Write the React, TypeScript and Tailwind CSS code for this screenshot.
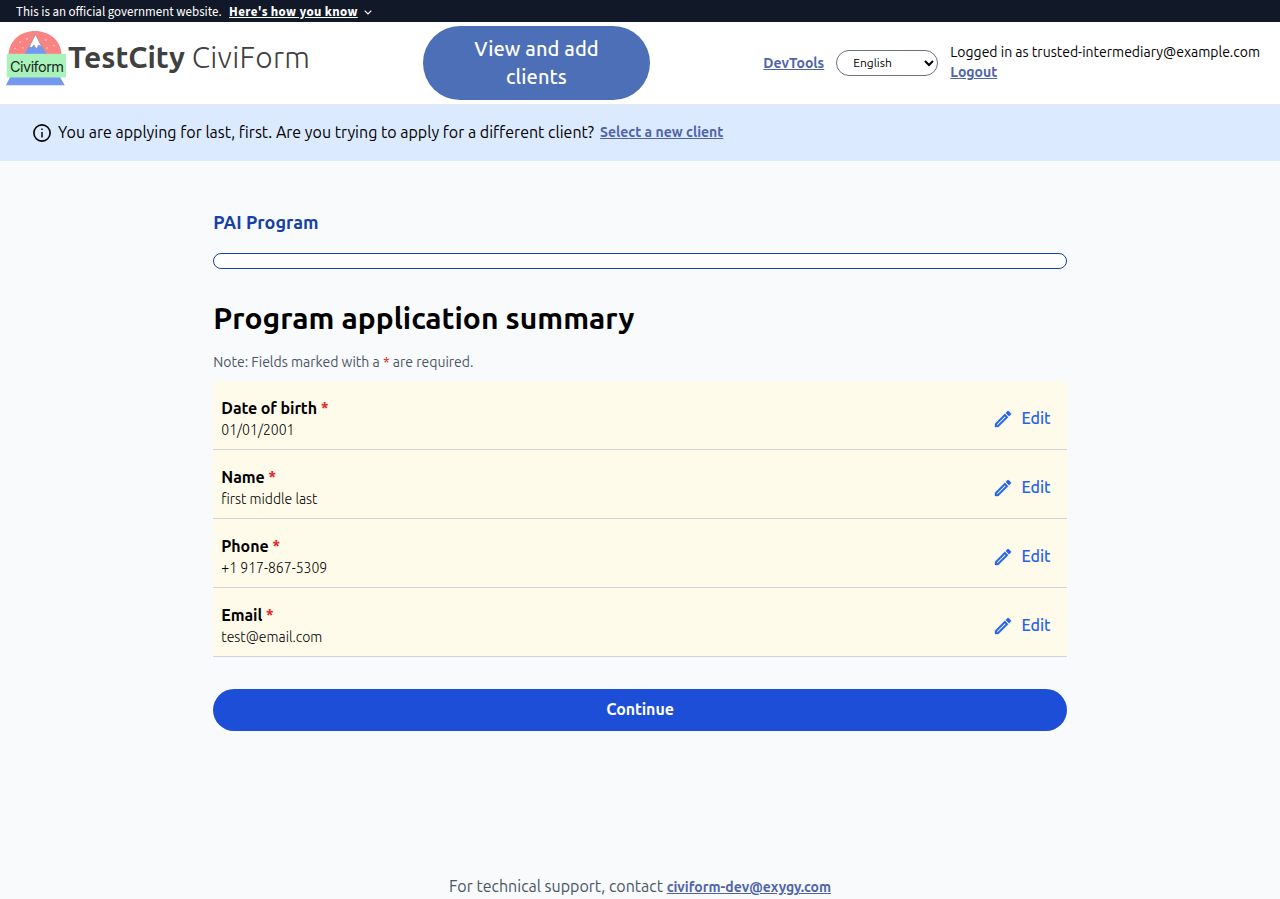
type Answer = { question: string; answer: string };

const answers: Answer[] = [
  { question: "Date of birth", answer: "01/01/2001" },
  { question: "Name", answer: "first middle last" },
  { question: "Phone", answer: "+1 917-867-5309" },
  { question: "Email", answer: "test@email.com" },
];

function Logo() {
  return (
    <svg viewBox="0 0 60 56" className="h-14 w-[60px] shrink-0">
      <path d="M2.5 24C3.5 10 15 1 29 1S54.5 10 55.5 24Z" fill="#fa8484" />
      <path d="M18.5 24L29.5 5 40.5 24Z" fill="#7398f0" />
      <path d="M29.5 4.5L35.5 16.5 32.5 15 30.5 19 28 15 25.5 17.5 23.5 16.5Z" fill="#fff" stroke="#888" strokeWidth="0.5" />
      <g fill="#ffd5d5">
        <circle cx="14" cy="12" r="0.8" />
        <circle cx="21" cy="9" r="0.8" />
        <circle cx="9" cy="18.5" r="0.8" />
        <circle cx="17" cy="18" r="0.8" />
        <circle cx="40" cy="10" r="0.8" />
        <circle cx="48" cy="15.5" r="0.8" />
        <circle cx="41" cy="18" r="0.8" />
      </g>
      <path d="M4.2 47H54L58.7 55.3H-0.2Z" fill="#7398f0" />
      <rect x="0.8" y="23.8" width="59.2" height="23.7" fill="#aaf2bb" />
      <text x="4" y="41.5" fontSize="14.5" textLength="54" fill="#1c2b20" className="font-[Inter,sans-serif]">
        Civiform
      </text>
    </svg>
  );
}

function PencilIcon() {
  return (
    <svg viewBox="3 3 18 18" className="mt-0.5 size-4 overflow-visible fill-current stroke-current stroke-[0.4]">
      <path d="M3 17.25V21h3.75L17.81 9.94l-3.75-3.75L3 17.25zM5.92 19H5v-.92l9.06-9.06.92.92L5.92 19zM20.71 5.63l-2.34-2.34c-.2-.2-.45-.29-.71-.29s-.51.1-.7.29l-1.83 1.83 3.75 3.75 1.83-1.83c.39-.39.39-1.02 0-1.41z" />
    </svg>
  );
}

function InfoIcon() {
  return (
    <svg viewBox="2 2 20 20" className="mt-0.5 size-[18px] fill-current">
      <path d="M11.200 7h1.600v1.800h-1.600zm0 4h1.600v6h-1.600z" />
      <circle cx="12" cy="12" r="9" className="fill-none stroke-current stroke-[1.800]" />
    </svg>
  );
}

function GovBanner() {
  return (
    <div className="flex h-[22px] items-center bg-[#111827] px-4 font-['Source_Sans_3','Noto_Sans',sans-serif] text-[12.96px] leading-[22px] text-white">
      <span className="pt-px">This is an official government website.</span>
      <a className="ml-[7.5px] pt-px font-bold tracking-[0.37px] underline">Here's how you know</a>
      <svg viewBox="0 0 8 5" className="mt-0.5 ml-1.5 h-[5px] w-2 fill-none stroke-white stroke-[1.2]">
        <path d="M0.7 0.7L4 4 7.3 0.7" />
      </svg>
    </div>
  );
}

function Header() {
  return (
    <header className="flex h-[83px] border-b border-[#e5e7eb] bg-white">
      <div className="flex w-[423px] pt-2 pl-1.5">
        <Logo />
        <div className="ml-0.5 pt-[9px] text-[30px] leading-9 text-[#404040]">
          <span className="font-bold">TestCity</span> <span className="font-light tracking-[0.25px]">CiviForm</span>
        </div>
      </div>
      <button className="mt-1 h-[74px] w-[227px] rounded-full bg-[#4d6fb8] px-10 text-xl leading-7 font-medium tracking-[0.1px] text-white">
        View and add clients
      </button>
      <nav className="ml-auto flex items-center gap-3 pr-5 text-sm">
        <a className="font-semibold text-[#4f64a8] underline">DevTools</a>
        <select className="h-[26px] w-[102px] rounded-full border border-[#6b7280] bg-white pb-0.5 pl-3 text-xs text-black">
          <option>English</option>
        </select>
        <div className="pb-0.5 leading-5">
          <p>Logged in as trusted-intermediary@example.com</p>
          <a className="font-semibold text-[#4f64a8] underline">Logout</a>
        </div>
      </nav>
    </header>
  );
}

function ClientNotice() {
  return (
    <div className="flex h-14 items-center bg-[#dbeafe] pb-0.5 pl-[33px]">
      <InfoIcon />
      <p className="ml-[7px]">
        You are applying for last, first. Are you trying to apply for a different client?
      </p>
      <a className="ml-1.5 text-sm font-semibold text-[#4f64a8] underline">Select a new client</a>
    </div>
  );
}

function AnswerRow({ question, answer }: Answer) {
  return (
    <li className="flex h-[69px] items-center justify-between border-b border-[#d1d5db] bg-[#fffbeb] pr-4 pl-2">
      <div className="pt-[5px]">
        <h3 className="leading-6 font-semibold tracking-[-0.1px]">
          {question} <span className="text-[#dc2626]">*</span>
        </h3>
        <p className="text-sm leading-5 font-light">{answer}</p>
      </div>
      <a className="flex items-center gap-2.5 pt-1.5 font-medium text-[#2563eb]">
        <PencilIcon />
        Edit
      </a>
    </li>
  );
}

export default function App() {
  return (
    <div className="flex h-[899px] flex-col overflow-hidden bg-[#f8fafc] font-[Ubuntu,'Noto_Sans',sans-serif] text-base text-black">
      <GovBanner />
      <Header />
      <ClientNotice />
      <main className="mx-auto w-2/3 pt-[47px]">
        <h2 className="text-lg leading-7 font-semibold text-[#1641a3]">PAI Program</h2>
        <div className="mt-[17px] h-4 rounded-full border border-[#1641a3] bg-white" />
        <h1 className="mt-[31px] text-[30px] leading-9 font-semibold">Program application summary</h1>
        <p className="mt-4 text-sm leading-5 text-[#4b5563]">
          Note: Fields marked with a <span className="text-[#dc2626]">*</span> are required.
        </p>
        <ul className="mt-[9px]">
          {answers.map((a) => (
            <AnswerRow key={a.question} {...a} />
          ))}
        </ul>
        <button className="mt-8 h-[42px] w-full rounded-full bg-[#1d4ed8] pb-0.5 font-semibold tracking-[-0.1px] text-white">
          Continue
        </button>
      </main>
      <footer className="mt-auto pb-px text-center leading-6 text-[#4b5563]">
        For technical support, contact{" "}
        <a className="text-sm font-semibold text-[#4f64a8] underline">civiform-dev@exygy.com</a>
      </footer>
    </div>
  );
}
